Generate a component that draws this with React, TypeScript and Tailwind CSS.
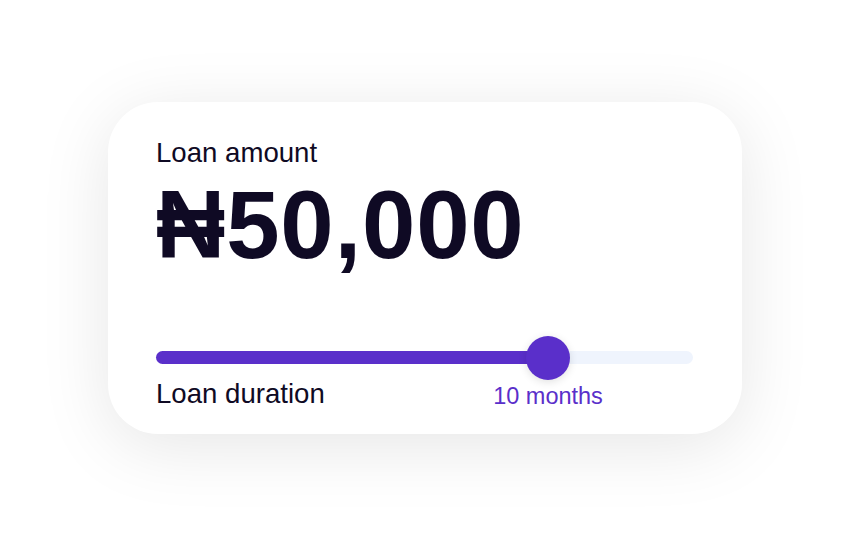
import React from "react";

export default function App() {
  const pct = 73;
  return (
    <div className="w-[850px] h-[548px] bg-white flex justify-center pt-[102px]" style={{ fontFamily: '"Liberation Sans", Arial, sans-serif' }}>
      <div className="w-[634px] h-[332px] rounded-[50px] bg-white shadow-[0_12px_70px_rgba(0,0,0,0.1)] pl-[48px] pr-[49px] pt-[35px] flex flex-col">
        <p className="text-[27.6px] leading-[32px] text-[#0f0a24]">Loan amount</p>
        <p className="mt-[8px] text-[96px] leading-[96px] font-bold text-[#0f0a24] tracking-[0.8px]">₦50,000</p>
        <div className="relative mt-[78px] h-[13px] rounded-full bg-[#eff4fd]">
          <div className="absolute left-0 top-0 h-full rounded-full bg-[#5a2fca]" style={{ width: `${pct}%` }} />
          <div
            className="absolute top-1/2 w-[44px] h-[44px] -translate-x-1/2 -translate-y-1/2 rounded-full bg-[#5a2fca] shadow-[0_2px_8px_rgba(0,0,0,0.12)]"
            style={{ left: `${pct}%` }}
          />
        </div>
        <div className="relative mt-[14px] h-[32px]">
          <p className="text-[27.6px] leading-[32px] text-[#0f0a24]">Loan duration</p>
          <p
            className="absolute top-[2px] -translate-x-1/2 whitespace-nowrap text-[23.5px] leading-[32px] text-[#5a2fca]"
            style={{ left: `${pct}%` }}
          >
            10 months
          </p>
        </div>
      </div>
    </div>
  );
}
